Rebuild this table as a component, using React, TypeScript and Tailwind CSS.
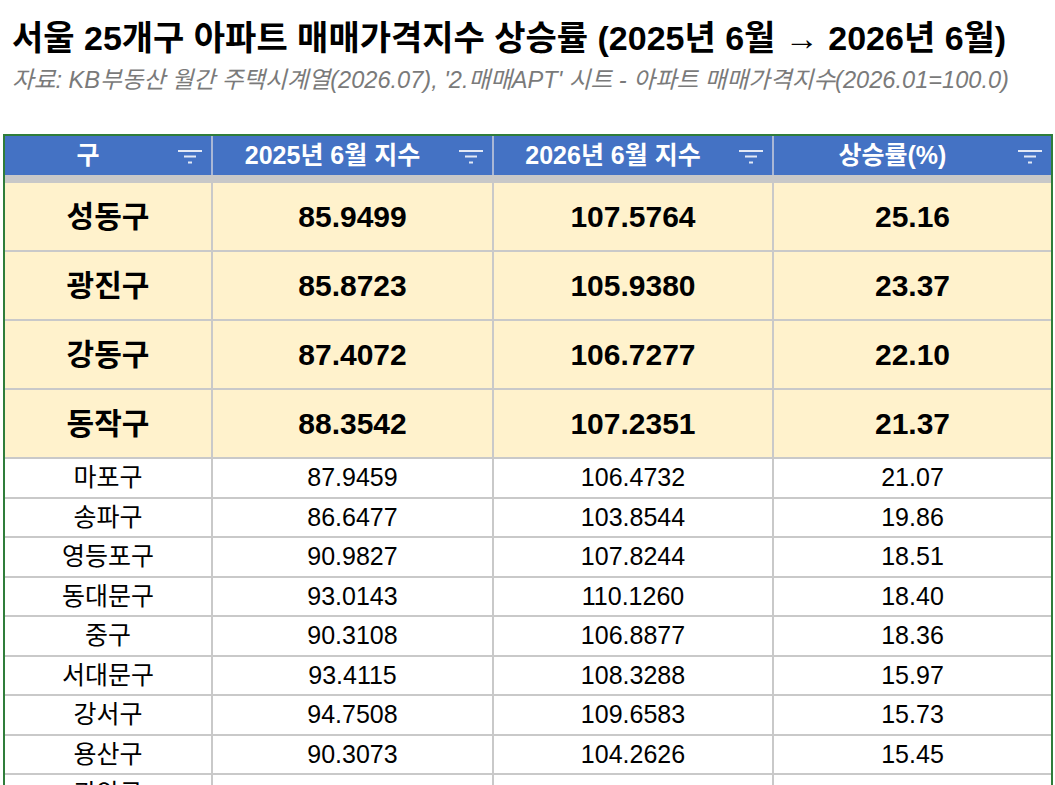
import React from "react";

type Row = { gu: string; a: string; b: string; r: string };

const top: Row[] = [
  { gu: "성동구", a: "85.9499", b: "107.5764", r: "25.16" },
  { gu: "광진구", a: "85.8723", b: "105.9380", r: "23.37" },
  { gu: "강동구", a: "87.4072", b: "106.7277", r: "22.10" },
  { gu: "동작구", a: "88.3542", b: "107.2351", r: "21.37" },
];

const rest: Row[] = [
  { gu: "마포구", a: "87.9459", b: "106.4732", r: "21.07" },
  { gu: "송파구", a: "86.6477", b: "103.8544", r: "19.86" },
  { gu: "영등포구", a: "90.9827", b: "107.8244", r: "18.51" },
  { gu: "동대문구", a: "93.0143", b: "110.1260", r: "18.40" },
  { gu: "중구", a: "90.3108", b: "106.8877", r: "18.36" },
  { gu: "서대문구", a: "93.4115", b: "108.3288", r: "15.97" },
  { gu: "강서구", a: "94.7508", b: "109.6583", r: "15.73" },
  { gu: "용산구", a: "90.3073", b: "104.2626", r: "15.45" },
  { gu: "관악구", a: "", b: "", r: "" },
];

function FilterIcon() {
  return (
    <svg width="24" height="14" viewBox="0 0 24 14" className="absolute right-[9px] top-[14px]">
      <rect x="0" y="0" width="24" height="2" fill="#e3e9f6" />
      <rect x="6" y="5.5" width="12" height="2" fill="#e3e9f6" />
      <rect x="10" y="11.5" width="4" height="2" fill="#e3e9f6" />
    </svg>
  );
}

function HeadCell({ label, w, last }: { label: string; w: string; last?: boolean }) {
  return (
    <div
      className={`relative flex items-center justify-center pr-[40px] h-full ${w} ${
        last ? "" : "border-r-2 border-[#a9b7d6]"
      }`}
    >
      <span className="text-white font-bold text-[25px] leading-none">{label}</span>
      <FilterIcon />
    </div>
  );
}

function DataRow({ row, big }: { row: Row; big?: boolean }) {
  const h = big ? "h-[69px] bg-[#fff2cc]" : "h-[39.5px] bg-white";
  const t = big ? "text-[30px] font-bold" : "text-[25px]";
  const cell = "flex items-center justify-center h-full border-r-2 border-[#c9c9c9]";
  return (
    <div className={`flex ${h} border-b-2 border-[#c9c9c9] ${t} text-black leading-none`}>
      <div className={`${cell} w-[208px]`}>{row.gu}</div>
      <div className={`${cell} w-[281px]`}>{row.a}</div>
      <div className={`${cell} w-[280px]`}>{row.b}</div>
      <div className="flex items-center justify-center h-full w-[277px]">{row.r}</div>
    </div>
  );
}

export default function App() {
  return (
    <div className="w-[1055px] h-[785px] overflow-hidden bg-white font-['Liberation_Sans','Noto_Sans_CJK_KR',sans-serif]">
      <div className="pl-[12px] pt-[18px]">
        <h1 className="text-[34px] leading-[40px] font-bold text-black whitespace-nowrap">
          서울 25개구 아파트 매매가격지수 상승률 (2025년 6월 → 2026년 6월)
        </h1>
        <p className="mt-[8px] text-[23.6px] leading-[28px] italic text-[#7a7a7a] whitespace-nowrap">
          자료: KB부동산 월간 주택시계열(2026.07), '2.매매APT' 시트 - 아파트 매매가격지수(2026.01=100.0)
        </p>
      </div>
      <div className="ml-[3px] mt-[40px] w-[1050px] border-l-2 border-r-2 border-t-2 border-[#2f7d3a]">
        <div className="flex h-[39px] bg-[#4472c4]">
          <HeadCell label="구" w="w-[208px]" />
          <HeadCell label="2025년 6월 지수" w="w-[281px]" />
          <HeadCell label="2026년 6월 지수" w="w-[280px]" />
          <HeadCell label="상승률(%)" w="w-[277px]" last />
        </div>
        <div className="h-[8px] bg-[#c8c8c8]" />
        {top.map((r) => (
          <DataRow key={r.gu} row={r} big />
        ))}
        {rest.map((r) => (
          <DataRow key={r.gu} row={r} />
        ))}
      </div>
    </div>
  );
}
